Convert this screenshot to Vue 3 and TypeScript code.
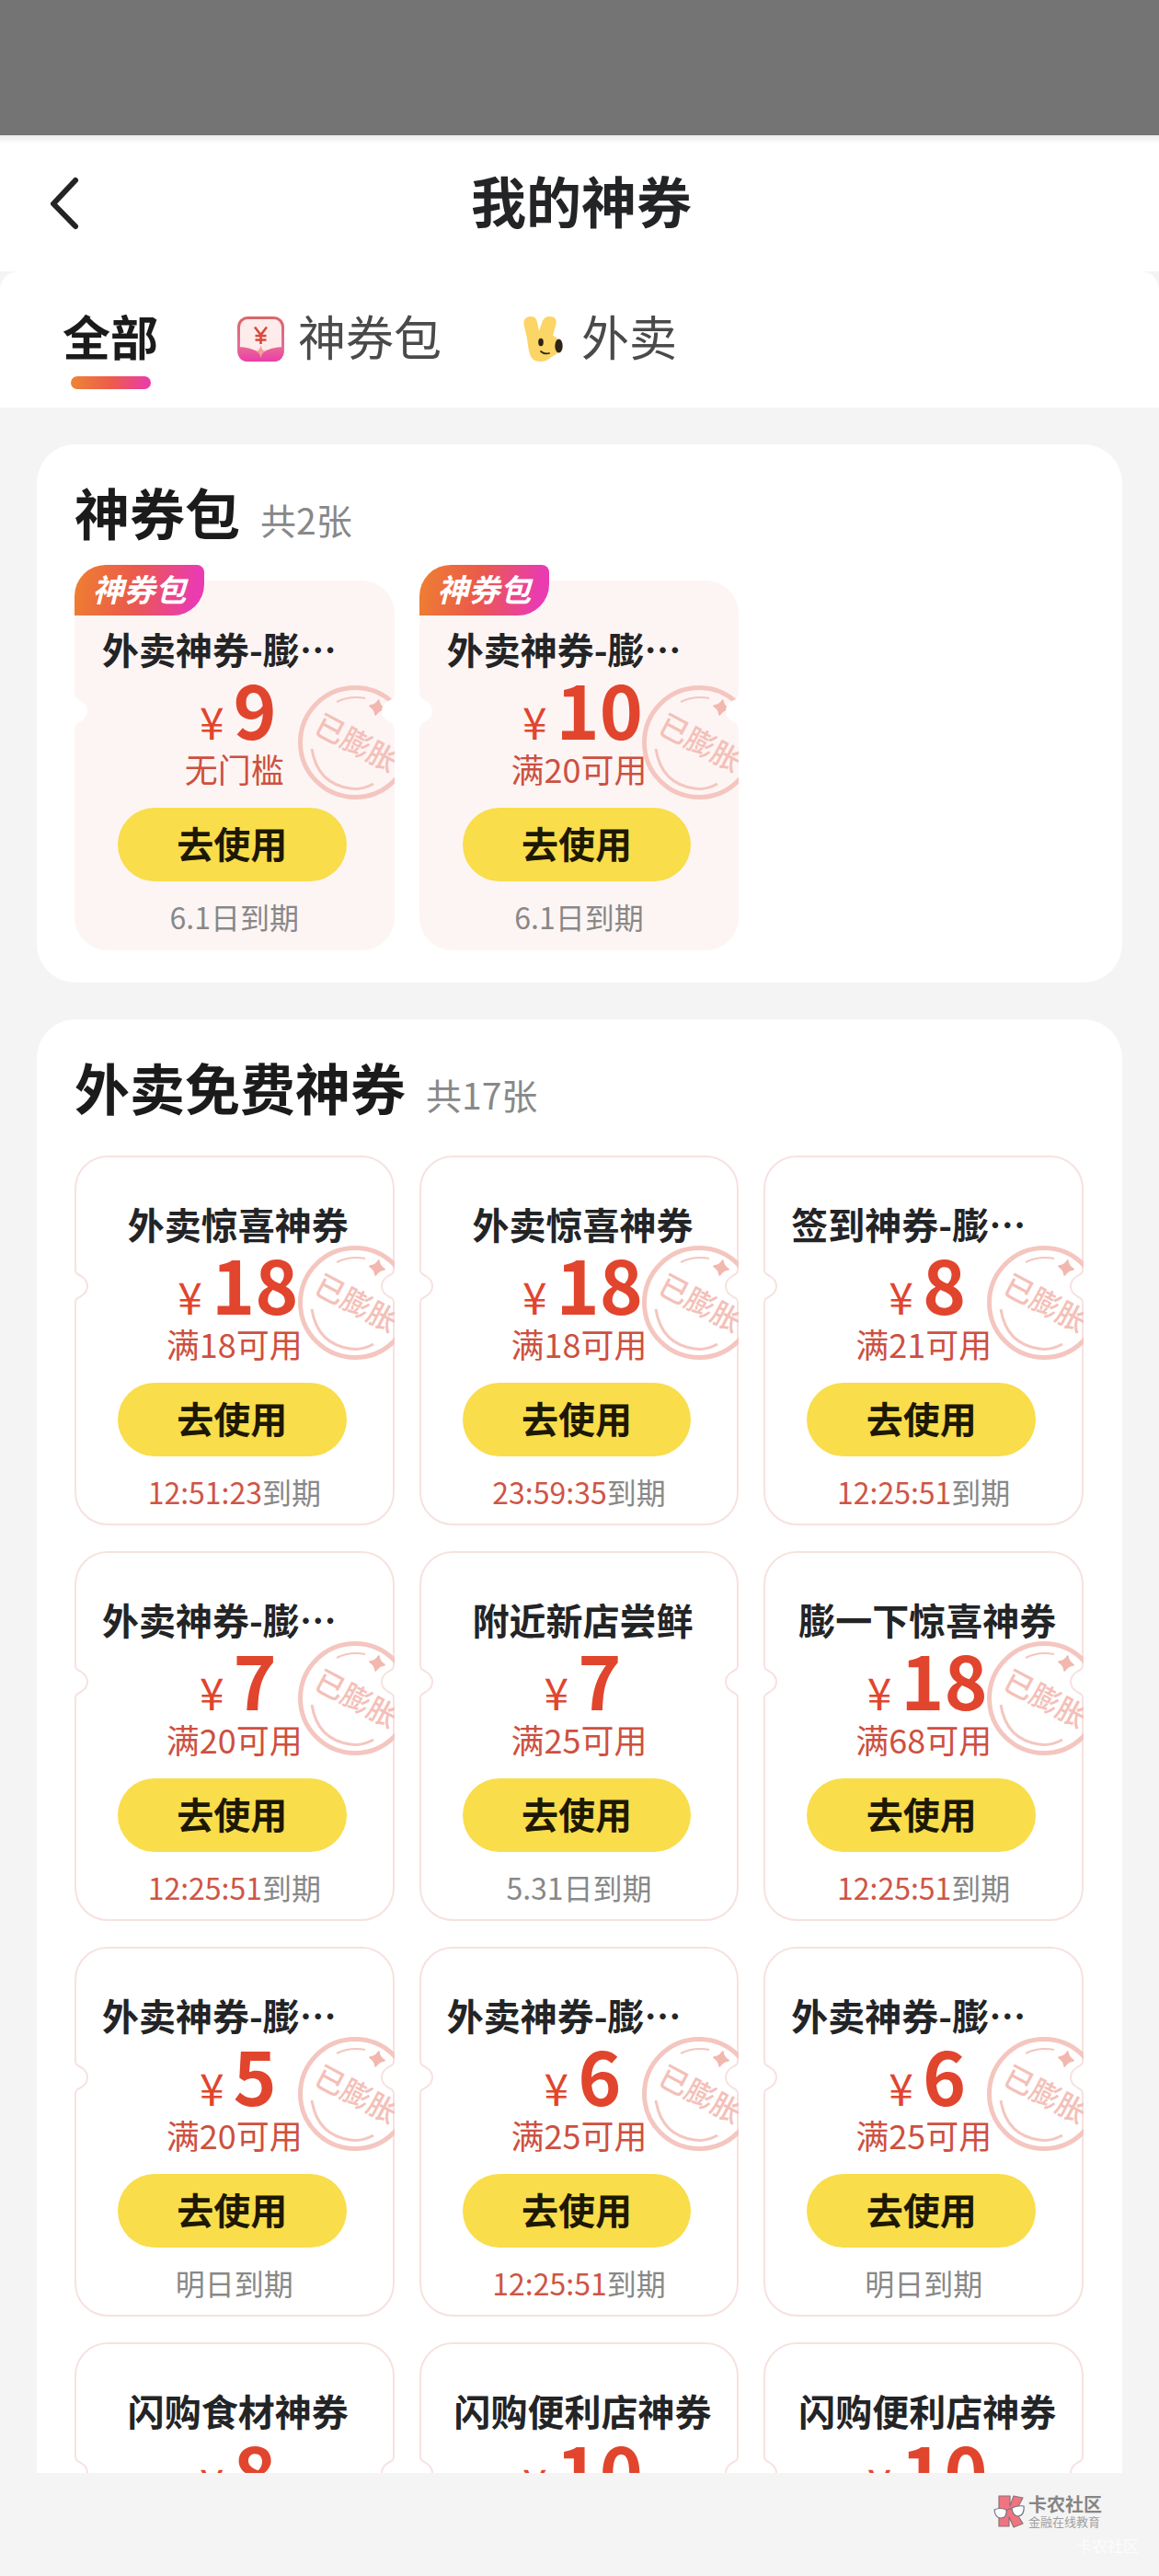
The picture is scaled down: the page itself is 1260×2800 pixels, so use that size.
<script setup lang="ts">
import { ref } from 'vue'

interface Coupon {
  name: string
  amount: number
  condition?: string
  countdown?: string
  expiry?: string
  inflated?: boolean
}

interface Section {
  title: string
  count: string
  pack: boolean
  coupons: Coupon[]
}

const tabs = [
  { id: 'all', label: '全部' },
  { id: 'pack', label: '神券包' },
  { id: 'takeout', label: '外卖' },
]
const activeTab = ref('all')

const sections: Section[] = [
  {
    title: '神券包',
    count: '共2张',
    pack: true,
    coupons: [
      { name: '外卖神券-膨…', amount: 9, condition: '无门槛', expiry: '6.1日到期', inflated: true },
      { name: '外卖神券-膨…', amount: 10, condition: '满20可用', expiry: '6.1日到期', inflated: true },
    ],
  },
  {
    title: '外卖免费神券',
    count: '共17张',
    pack: false,
    coupons: [
      { name: '外卖惊喜神券', amount: 18, condition: '满18可用', countdown: '12:51:23', expiry: '到期', inflated: true },
      { name: '外卖惊喜神券', amount: 18, condition: '满18可用', countdown: '23:59:35', expiry: '到期', inflated: true },
      { name: '签到神券-膨…', amount: 8, condition: '满21可用', countdown: '12:25:51', expiry: '到期', inflated: true },
      { name: '外卖神券-膨…', amount: 7, condition: '满20可用', countdown: '12:25:51', expiry: '到期', inflated: true },
      { name: '附近新店尝鲜', amount: 7, condition: '满25可用', expiry: '5.31日到期' },
      { name: '膨一下惊喜神券', amount: 18, condition: '满68可用', countdown: '12:25:51', expiry: '到期', inflated: true },
      { name: '外卖神券-膨…', amount: 5, condition: '满20可用', expiry: '明日到期', inflated: true },
      { name: '外卖神券-膨…', amount: 6, condition: '满25可用', countdown: '12:25:51', expiry: '到期', inflated: true },
      { name: '外卖神券-膨…', amount: 6, condition: '满25可用', expiry: '明日到期', inflated: true },
      { name: '闪购食材神券', amount: 8 },
      { name: '闪购便利店神券', amount: 10 },
      { name: '闪购便利店神券', amount: 10 },
    ],
  },
]
</script>

<template>
  <div class="page" lang="zh-CN">
    <div class="status-bar"></div>
    <header class="header">
      <button class="back" type="button" aria-label="返回">
        <svg width="36" height="60" viewBox="0 0 36 60" fill="none" stroke="#232426" stroke-width="6" stroke-linecap="round" stroke-linejoin="round">
          <path d="M30 5 6 30.500 30 55" />
        </svg>
      </button>
      <h1>我的神券</h1>
    </header>

    <div class="tabs-wrap">
      <nav class="tabs">
        <button
          v-for="tab in tabs"
          :key="tab.id"
          type="button"
          class="tab"
          :class="{ active: tab.id === activeTab }"
          @click="activeTab = tab.id"
        >
          <svg v-if="tab.id === 'pack'" class="tab-icon" viewBox="0 0 51 51">
            <defs>
              <linearGradient id="packFrame" x1="0" y1="0" x2="0" y2="1">
                <stop offset="0" stop-color="#d9676b" />
                <stop offset="1" stop-color="#ee6fae" />
              </linearGradient>
              <linearGradient id="packBase" x1="0" y1="0" x2="0" y2="1">
                <stop offset="0" stop-color="#e76a94" />
                <stop offset="1" stop-color="#ec3cab" />
              </linearGradient>
            </defs>
            <rect x="1.500" y="2.500" width="48" height="46" rx="10" fill="#fdeceb" stroke="url(#packFrame)" stroke-width="3" />
            <path d="M1 34 Q14 34 25.500 41 Q37 34 50 34 V39 Q50 50 39 50 H12 Q1 50 1 39Z" fill="url(#packBase)" />
            <path d="M25.500 32 Q26.500 38 31 39 Q26.500 40 25.500 46 Q24.500 40 20 39 Q24.500 38 25.500 32Z" fill="#f6a196" />
            <path d="M19 12.500 25.500 21 32 12.500 M25.500 21V31 M19.500 22H31.500 M19.500 26.500H31.500" fill="none" stroke="#d94a3c" stroke-width="2.600" />
          </svg>
          <svg v-else-if="tab.id === 'takeout'" class="tab-icon" viewBox="0 0 51 51">
            <path
              d="M4 12C2 4 6 1 11 1C16 1 18 4 19 12L20 17L23 8C25 2 28 1 32 1C38 1 40 6 38 11L35 22C39 23 43 28 44 33C44 39 38 43 33 45C29 51 16 52 12 46C9 42 8 32 7 25Z"
              fill="#fbd565"
            />
            <ellipse cx="22" cy="29" rx="2.800" ry="4.200" fill="#2b2417" />
            <ellipse cx="41.500" cy="33" rx="4.200" ry="7.500" fill="#2b2417" />
            <path d="M22 39 Q26 42.500 31 41" fill="none" stroke="#2b2417" stroke-width="1.800" stroke-linecap="round" />
          </svg>
          <span>{{ tab.label }}</span>
        </button>
      </nav>
    </div>

    <main class="content">
      <section v-for="section in sections" :key="section.title" class="section">
        <div class="section-head">
          <h2>{{ section.title }}</h2>
          <span class="count">{{ section.count }}</span>
        </div>
        <div class="grid">
          <article v-for="(coupon, i) in section.coupons" :key="i" class="coupon" :class="{ pack: section.pack }">
            <span v-if="section.pack" class="badge">神券包</span>

            <svg v-if="coupon.inflated" class="stamp" viewBox="0 0 105 126">
              <g fill="none" stroke="#f4c6bf">
                <circle cx="62" cy="63" r="59.500" stroke-width="5" />
                <path d="M42 19 Q56 12 73 15" stroke-width="2" />
                <path d="M15 70 Q21 108 57 113 Q69 115 82 108" stroke-width="3" />
              </g>
              <path d="M0 -8 Q2 -2 8 0 Q2 2 0 8 Q-2 2 -8 0 Q-2 -2 0 -8Z" fill="#f2b8af" stroke="#f2b8af" stroke-width="2" stroke-linejoin="round" transform="translate(86 25) rotate(12)" />
              <text x="63" y="75" text-anchor="middle" transform="rotate(28 63 64)">已膨胀</text>
            </svg>

            <svg class="notch notch-left" viewBox="0 0 16 44">
              <path d="M0 4H1C1 8 3 9 7 11C11 13.500 14 17 14 22S11 30.500 7 33C3 35 1 36 1 40H0Z" />
              <path class="edge" d="M1 4C1 8 3 9 7 11C11 13.500 14 17 14 22S11 30.500 7 33C3 35 1 36 1 40" />
            </svg>
            <svg class="notch notch-right" viewBox="0 0 16 44">
              <path d="M0 4H1C1 8 3 9 7 11C11 13.500 14 17 14 22S11 30.500 7 33C3 35 1 36 1 40H0Z" />
              <path class="edge" d="M1 4C1 8 3 9 7 11C11 13.500 14 17 14 22S11 30.500 7 33C3 35 1 36 1 40" />
            </svg>

            <h3 :class="{ truncated: coupon.name.endsWith('…') }">{{ coupon.name }}</h3>
            <p class="price"><span class="yen">¥</span><strong>{{ coupon.amount }}</strong></p>
            <template v-if="coupon.condition">
              <p class="condition">{{ coupon.condition }}</p>
              <button type="button" class="use">去使用</button>
              <p class="expiry"><span v-if="coupon.countdown" class="countdown">{{ coupon.countdown }}</span>{{ coupon.expiry }}</p>
            </template>
          </article>
        </div>
      </section>
    </main>

    <footer class="footer">
      <div class="brand">
        <svg width="34" height="36" viewBox="0 0 34 36">
          <path d="M6 1H18V12L22 1 32 3 24 18 32 31 22 35 17 24V34H6Z" fill="#f07480" stroke="#8c7376" stroke-width="1.200" stroke-linejoin="round" />
          <path d="M1 16 Q7 13 14 16 Q15 25 8 25 Q2 25 1 16Z M20 14 Q27 11 33 12 Q34 22 27 23 Q21 23 20 14Z" fill="#fff" stroke="#6d7480" stroke-width="1.200" />
          <path d="M14 17 Q17 14 20 15" fill="none" stroke="#6d7480" />
        </svg>
        <div class="brand-text">
          <span class="brand-name">卡农社区</span>
          <span class="brand-sub">金融在线教育</span>
        </div>
      </div>
      <span class="credit">卡农社区</span>
    </footer>
  </div>
</template>

<style>
body {
  margin: 0;
  background: #f4f4f4;
}
</style>

<style scoped>
.page {
  display: flex;
  flex-direction: column;
  height: 100vh;
  overflow: hidden;
  background: #f4f4f4;
  color: #1b1b1c;
  font-family: "Noto Sans CJK SC", "Noto Sans", sans-serif;
}

h1,
h2,
h3,
p {
  margin: 0;
}

button {
  padding: 0;
  border: 0;
  background: none;
  color: inherit;
  font: inherit;
  cursor: pointer;
}

.status-bar {
  flex: none;
  height: 147px;
  background: #747474;
}

.header {
  flex: none;
  display: grid;
  grid-template-columns: 1fr auto 1fr;
  align-items: center;
  height: 148px;
  box-sizing: border-box;
  padding: 0 48px 0 52px;
  background: linear-gradient(#ececec, #fff 10px);
}

.back {
  display: flex;
  justify-self: start;
}

h1 {
  padding-bottom: 8px;
  font-size: 60px;
  line-height: 72px;
  color: #232426;
}

.tabs-wrap {
  flex: none;
  background: #f4f4f4;
}

.tabs {
  display: flex;
  gap: 86px;
  height: 148px;
  box-sizing: border-box;
  padding: 34px 68px 0;
  border-radius: 20px 20px 0 0;
  background: #fff;
}

.tab {
  position: relative;
  display: flex;
  align-items: center;
  gap: 15px;
  height: 72px;
  font-size: 52px;
  line-height: 72px;
  color: #4a4a4a;
}

.tab.active {
  font-weight: 700;
  color: #1b1b1c;
}

.tab.active::after {
  content: "";
  position: absolute;
  top: 80px;
  left: 9px;
  right: 8px;
  height: 14px;
  border-radius: 7px;
  background: linear-gradient(90deg, #ee8435, #ec5d4c 50%, #e93bac);
}

.tab-icon {
  width: 51px;
  height: 51px;
  margin-top: 6px;
}

.content {
  flex: 1;
  min-height: 0;
  display: flex;
  flex-direction: column;
  gap: 40px;
  padding: 40px 40px 0;
  overflow-y: auto;
  scrollbar-width: none;
}

.section {
  flex: none;
  padding: 37px 42px 35px 41px;
  border-radius: 42px;
  background: #fff;
}

.section-head {
  display: flex;
  align-items: flex-start;
  gap: 22px;
  height: 111px;
}

h2 {
  font-size: 60px;
  line-height: 72px;
}

.count {
  padding-top: 14px;
  font-size: 39px;
  line-height: 60px;
  color: #888;
}

.grid {
  display: grid;
  grid-template-columns: repeat(3, 1fr);
  gap: 28px 27px;
}

.coupon {
  position: relative;
  display: flex;
  flex-direction: column;
  min-height: 402px;
  box-sizing: border-box;
  padding-top: 46px;
  border: 2px solid #f6e2df;
  border-radius: 36px;
}

.coupon.pack {
  border-color: #fdf5f4;
  border-top-left-radius: 36px;
  background: #fdf5f4;
}

.badge {
  position: absolute;
  top: -19px;
  left: -2px;
  width: 141px;
  height: 55px;
  border-radius: 34px 8px 34px 0;
  background: linear-gradient(100deg, #ef8030, #ea5b4b 45%, #ea3bb0 90%);
  color: #fff;
  font-size: 34px;
  font-style: italic;
  font-weight: 700;
  line-height: 52px;
  text-align: center;
}

.stamp {
  position: absolute;
  top: 95px;
  right: -2px;
  width: 105px;
  height: 126px;
}

.pack .stamp {
  top: 111px;
}

.stamp text {
  fill: #f4c0b8;
  font-size: 32px;
  font-weight: 500;
}

.notch {
  position: absolute;
  top: 118px;
  width: 16px;
  height: 44px;
  fill: #fff;
}

.notch-left {
  left: -2px;
}

.notch-right {
  right: -2px;
  transform: scaleX(-1);
}

.edge {
  fill: none;
  stroke: #f6e2df;
  stroke-width: 2;
}

.pack .edge {
  stroke: none;
}

h3 {
  margin: 0 20px 0 28px;
  font-size: 40px;
  line-height: 52px;
  color: #232426;
  text-align: center;
  white-space: nowrap;
}

h3.truncated {
  text-align: left;
}

.price {
  position: relative;
  display: flex;
  align-items: baseline;
  justify-content: center;
  gap: 10px;
  margin: 0 20px 0 28px;
  height: 76px;
  line-height: 76px;
  color: #e1452d;
}

.price strong {
  font-size: 80px;
}

.yen {
  font-size: 48px;
}

.condition {
  position: relative;
  margin-top: 6px;
  font-size: 36px;
  line-height: 44px;
  color: #cd5040;
  text-align: center;
}

.use {
  position: relative;
  height: 80px;
  margin: 21px 50px 0 45px;
  padding-bottom: 4px;
  border-radius: 40px;
  background: #f9dd4a;
  color: #1d1803;
  font-size: 40px;
  font-weight: 700;
  line-height: 76px;
}

.expiry {
  margin-top: 18px;
  font-size: 32px;
  line-height: 40px;
  color: #888;
  text-align: center;
}

.countdown {
  color: #cf5545;
}

.footer {
  flex: none;
  display: flex;
  flex-direction: column;
  align-items: flex-end;
  height: 112px;
  box-sizing: border-box;
  padding: 23px 22px 0 0;
  background: #f4f4f4;
}

.brand {
  display: flex;
  align-items: center;
  gap: 4px;
  margin-right: 40px;
}

.brand-text {
  display: flex;
  flex-direction: column;
}

.brand-name {
  font-size: 20px;
  font-weight: 700;
  line-height: 22px;
  color: #858585;
}

.brand-sub {
  font-size: 13px;
  line-height: 16px;
  color: #a0a0a0;
}

.credit {
  margin-top: 6px;
  font-size: 17px;
  line-height: 24px;
  color: #fcfcfc;
}
</style>
